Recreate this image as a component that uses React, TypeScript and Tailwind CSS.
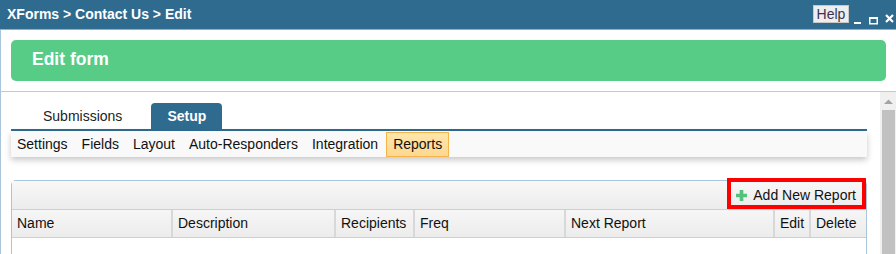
import React from "react";

const cols = [
  { label: "Name", w: "w-[161px]" },
  { label: "Description", w: "w-[163px]" },
  { label: "Recipients", w: "w-[79px]" },
  { label: "Freq", w: "w-[151px]" },
  { label: "Next Report", w: "w-[209px]" },
  { label: "Edit", w: "w-[36px]" },
  { label: "Delete", w: "flex-1" },
];

const navItems = ["Settings", "Fields", "Layout", "Auto-Responders", "Integration"];

export default function App() {
  return (
    <div className="w-[896px] h-[254px] overflow-hidden bg-white flex flex-col font-['Liberation_Sans',Arial,sans-serif] text-[14px] text-[#222]">
      {/* Title bar */}
      <div className="h-[30px] shrink-0 bg-[#2e6b8f] border-b border-[#8fb1c9] flex items-center pl-[7px] pr-[2px]">
        <div className="flex-1 text-white font-bold text-[14px] leading-none pb-[2px]">XForms &gt; Contact Us &gt; Edit</div>
        <div className="h-[18px] w-[36px] bg-[#eeeeee] border border-[#c8c8c8] text-[#3b3350] text-[14px] leading-[16px] flex items-center justify-center mb-[1px]">Help</div>
        <svg className="ml-[5px]" width="7" height="20" viewBox="0 0 7 20">
          <rect x="0" y="17" width="7" height="2" fill="#fff" />
        </svg>
        <svg className="ml-[8px]" width="9" height="20" viewBox="0 0 9 20">
          <rect x="0.75" y="12.75" width="7.5" height="6" fill="none" stroke="#fff" strokeWidth="1.5" />
          <rect x="0" y="12" width="9" height="2" fill="#fff" />
        </svg>
        <svg className="ml-[7px]" width="9" height="20" viewBox="0 0 9 20">
          <path d="M1 10 L8 17 M8 10 L1 17" stroke="#fff" strokeWidth="2.2" />
        </svg>
      </div>

      {/* Header area */}
      <div className="h-[62px] shrink-0 border-l border-[#a9c5dc] pt-[10px] pl-[10px] pr-[10px] border-b border-b-[#c8c8c8]">
        <div className="h-[41px] bg-[#57cc87] rounded-[5px] flex items-center pl-[21px]">
          <span className="text-white font-bold text-[17.5px] leading-none pb-[1px]">Edit form</span>
        </div>
      </div>

      {/* Body */}
      <div className="flex-1 flex min-h-0">
        <div className="flex-1 border-l border-[#a9c5dc] pl-[10px] pr-[13px] flex flex-col min-h-0">
          {/* Tabs */}
          <div className="pt-[11px] flex items-end">
            <div className="ml-[15px] h-[26px] px-[17px] flex items-center text-[#222]">Submissions</div>
            <div className="ml-[12px] h-[26px] px-[16px] flex items-center bg-[#2e6b8f] rounded-t-[4px] text-white font-bold">Setup</div>
          </div>
          <div className="h-[2px] bg-[#2e6b8f]" />
          {/* Sub nav */}
          <div className="h-[26px] bg-[#f9f9f9] flex items-center gap-[2px] shadow-[0_3px_6px_rgba(0,0,0,0.22)]">
            {navItems.map((n) => (
              <div key={n} className="h-[25px] px-[6px] flex items-center text-[#111]">{n}</div>
            ))}
            <div className="h-[25px] px-[6px] flex items-center text-[#111] bg-gradient-to-b from-[#ffe6ac] to-[#fdd88f] border border-[#f8b44c]">Reports</div>
          </div>

          {/* Panel */}
          <div className="mt-[23px] flex-1 border border-[#a9c5dc] border-b-0 rounded-t-[5px] flex flex-col">
            <div className="h-[28px] shrink-0 bg-gradient-to-b from-[#f8f8f8] to-[#ececec] flex items-center justify-end">
              <div className="relative h-[24px] flex items-center pl-[9px] pr-[9px] mr-[1px]">
                <div className="absolute left-0 right-[-1px] top-[-5px] bottom-[-2px] border-[4px] border-[#ff0000]" />
                <svg width="11" height="11" viewBox="0 0 11 11">
                  <path d="M5.5 0 V11 M0 5.5 H11" stroke="#52c27c" strokeWidth="3.6" />
                </svg>
                <span className="ml-[6px] text-[#111]">Add New Report</span>
              </div>
            </div>
            <div className="h-[29px] shrink-0 flex border-t border-b border-[#cfcfcf] bg-gradient-to-b from-[#f6f6f6] to-[#ececec]">
              {cols.map((c, i) => (
                <div
                  key={c.label}
                  className={`${c.w} h-full flex items-center pl-[5px] text-[#111] ${i < cols.length - 1 ? "border-r-2 border-r-[#d8d8d8]" : ""}`}
                >
                  {c.label}
                </div>
              ))}
            </div>
            <div className="flex-1 bg-white" />
          </div>
        </div>

        {/* Scrollbar */}
        <div className="w-[16px] shrink-0 bg-[#f0f0f0] flex flex-col items-center">
          <svg className="mt-[7px]" width="9" height="6" viewBox="0 0 9 6">
            <path d="M0 5 L4.5 0.5 L9 5 Z" fill="#a3a3a3" />
          </svg>
          <div className="mt-[5px] w-[13px] flex-1 bg-[#c1c1c1]" />
        </div>
      </div>
    </div>
  );
}
